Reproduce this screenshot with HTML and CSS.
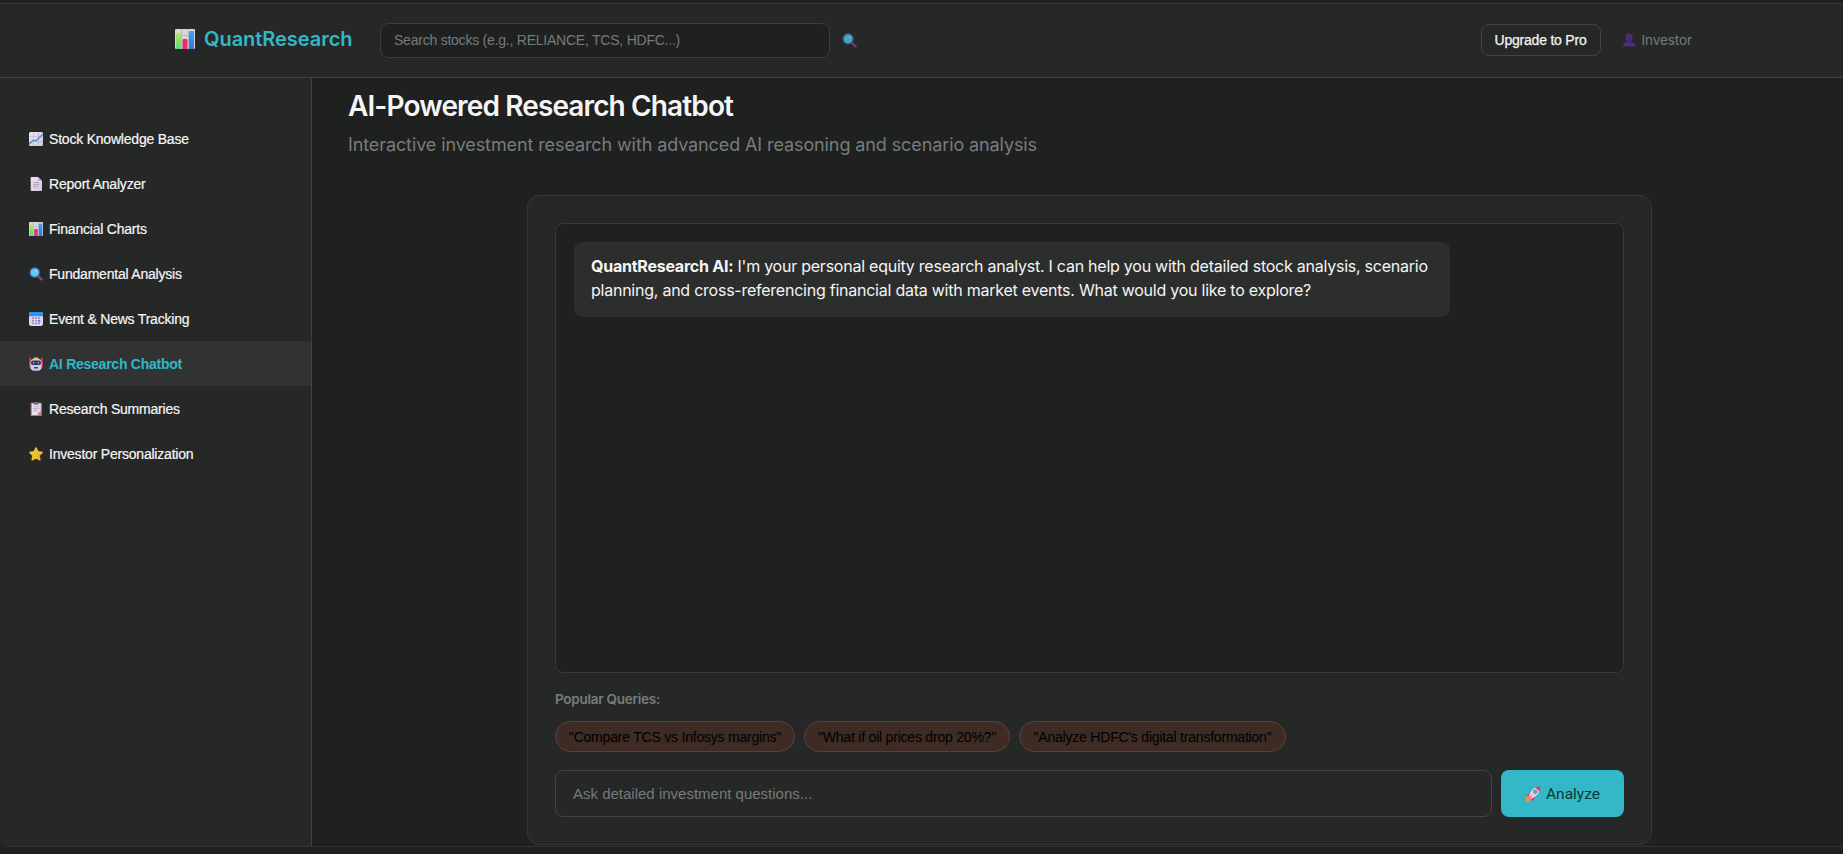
FILE: index.html
```html
<!DOCTYPE html>
<html lang="en">
<head>
<meta charset="utf-8">
<title>QuantResearch</title>
<link rel="stylesheet" href="styles.css">
</head>
<body>
<svg class="defs" width="0" height="0" aria-hidden="true">
  <defs>
    <linearGradient id="gPaper" x1="0" y1="0" x2="1" y2="1"><stop offset="0" stop-color="#eee6f2"/><stop offset="1" stop-color="#d2c5e0"/></linearGradient>
    <linearGradient id="gGreen" x1="0" y1="0" x2="0" y2="1"><stop offset="0" stop-color="#b5ea50"/><stop offset="1" stop-color="#62d08c"/></linearGradient>
    <linearGradient id="gBlue" x1="0" y1="0" x2="0" y2="1"><stop offset="0" stop-color="#30a8f5"/><stop offset="1" stop-color="#3b78d4"/></linearGradient>
    <symbol id="bars" viewBox="0 0 20 20"><rect width="20" height="20" rx="1.2" fill="#dcd3e4"/><path d="M6.5 0v20M13.5 0v20M0 6.5h20M0 13h20" stroke="#b8afc2" stroke-width=".8"/><path d="M1 20V5.3Q1 4 2.3 4h2.4Q6 4 6 5.3V20z" fill="url(#gGreen)"/><path d="M7.5 20v-8.700q0-1.300 1.300-1.300h2.400q1.300 0 1.300 1.300V20z" fill="#e92d70"/><path d="M14 20V3.300Q14 2 15.300 2h2.400Q19 2 19 3.300V20z" fill="url(#gBlue)"/></symbol>
    <symbol id="trend" viewBox="0 0 14 14"><rect width="14" height="14" rx="1.5" fill="url(#gPaper)"/><path d="M4.500 0v14M9.500 0v14M0 4.500h14M0 9.500h14" stroke="#b9afc4" stroke-width=".5"/><path d="M0 12.200L4.500 8l2.300 1L13.800 2.200" fill="none" stroke="#3b91d6" stroke-width="1.300"/></symbol>
    <symbol id="page" viewBox="0 0 14 14"><path d="M2.500 0H9l4 4v9.200q0 .8-.8.800H2.500q-.8 0-.8-.8V.8q0-.8.800-.8z" fill="url(#gPaper)"/><path d="M9 0v3.200q0 .8.800.800H13z" fill="#bcafd0"/><path d="M4 5.700h6M4 7.700h6M4 9.700h4.200" stroke="#a399ab" stroke-width=".9"/></symbol>
    <symbol id="lens" viewBox="0 0 14 14"><path d="M9.200 9.200l3.300 3.100" stroke="#7b4687" stroke-width="2.500" stroke-linecap="round"/><circle cx="5.700" cy="5.500" r="4.700" fill="#58cdee" stroke="#3e63ac" stroke-width="1.200"/><circle cx="7.300" cy="3.800" r=".9" fill="#9be6f8"/></symbol>
    <symbol id="cal" viewBox="0 0 14 14"><rect width="14" height="14" rx="2.200" fill="#dfd5ec"/><path d="M0 4.200V2.200Q0 0 2.200 0h9.600Q14 0 14 2.200v2z" fill="#2c91f4"/><path d="M3 5.200h2v1.700H3zm3 0h2v1.700H6zm3 0h2v1.700H9zM3 7.900h2v1.700H3zm3 0h2v1.700H6zM3 10.600h2v1.600H3zm3 0h2v1.600H6zm3 0h2v1.600H9z" fill="#9c93ab"/><path d="M9 7.900h2.200v1.900H9z" fill="#2c91f4"/></symbol>
    <symbol id="bot" viewBox="0 0 14 14"><path d="M.9.8v9M13.100.8v9" stroke="#ef2f70" stroke-width="1.300" stroke-linecap="round"/><ellipse cx="7" cy="1.600" rx="2.700" ry="1.400" fill="#f6b52d"/><rect x="1.300" y="1.700" width="11.400" height="12" rx="4" fill="#d7c5e5"/><rect x="2" y="3.600" width="10" height="4.400" rx="2" fill="#3b3353"/><circle cx="4.700" cy="5.700" r="1" fill="#39a8ea"/><circle cx="9.300" cy="5.700" r="1" fill="#39a8ea"/><rect x="5" y="10" width="4" height="1.600" rx=".7" fill="#4a355d"/></symbol>
    <symbol id="clip" viewBox="0 0 14 14"><rect x="1.700" y=".7" width="11.200" height="13.300" rx=".8" fill="#bd7d59"/><path d="M2.800 1.500h8.900v8.200l-2.900 3.200h-6z" fill="#e9e0f0"/><path d="M8.800 12.900V9.700h2.900z" fill="#b6a9c5"/><rect x="4.700" y="0" width="5" height="2.800" rx=".8" fill="#75697e"/><path d="M4.300 4.700h6M4.300 6.700h6M4.300 8.700h3.800" stroke="#a499ae" stroke-width=".8"/></symbol>
    <symbol id="star" viewBox="0 0 14 14"><path d="M7 .9l1.900 3.900 4.300.7-3.100 3 .8 4.500L7 11l-3.900 2 .8-4.500-3.100-3 4.300-.7z" fill="#edc133" stroke="#edc133" stroke-width="1.400" stroke-linejoin="round"/><path d="M9 8l3.500-2-2.400 2.500.8 4.500L8 11z" fill="#d9a92e"/></symbol>
    <symbol id="user" viewBox="0 0 14 14"><path d="M.7 13.600Q.7 9.700 4.600 9h4.800q3.900.7 3.900 4.600z" fill="#4b2e7e"/><path d="M3.400 4Q3.400.2 7 .2T10.600 4v1.800Q10.300 8 8.700 9q-1.700 1.500-3.400 0-1.600-1-1.900-3.200z" fill="#472c72"/></symbol>
    <symbol id="rocket" viewBox="0 0 16 16"><path d="M1.200 10.600l3.300-.4 1.800 2.200-2.300 3-3.300.2z" fill="#f79136"/><path d="M5.600 6L1.300 9.800l3.300.9zM10.200 10.500l-2 5-2.200-3.500z" fill="#f3316d"/><path d="M3.800 10.700Q5 4.200 10.800 1.500l3.700 3.600q-2.400 5.800-8.800 7.700z" fill="#ddd2e7"/><path d="M10.500 1.600Q12.700.5 15.500.5q0 2.700-1.200 5z" fill="#ee3161"/><circle cx="10.200" cy="5.700" r="1.700" fill="#5caadf" stroke="#5c6b98" stroke-width=".7"/><path d="M3.500 12.800q1.600-3 3.800-4.200-1 2.700-3.800 4.200z" fill="#f3316d"/></symbol>
  </defs>
</svg>
<div class="app">
  <header class="header">
    <div class="brand"><svg class="brand-icon"><use href="#bars"/></svg><span class="brand-name">QuantResearch</span></div>
    <div class="search"><span>Search stocks (e.g., RELIANCE, TCS, HDFC...)</span></div>
    <svg class="search-icon"><use href="#lens"/></svg>
    <div class="account">
      <button class="upgrade">Upgrade to Pro</button>
      <svg class="user-icon"><use href="#user"/></svg><span class="role">Investor</span>
    </div>
  </header>
  <div class="body">
    <nav class="sidebar">
      <a class="item"><svg><use href="#trend"/></svg><span>Stock Knowledge Base</span></a>
      <a class="item"><svg><use href="#page"/></svg><span>Report Analyzer</span></a>
      <a class="item"><svg><use href="#bars"/></svg><span>Financial Charts</span></a>
      <a class="item"><svg><use href="#lens"/></svg><span>Fundamental Analysis</span></a>
      <a class="item"><svg><use href="#cal"/></svg><span>Event &amp; News Tracking</span></a>
      <a class="item active"><svg><use href="#bot"/></svg><span>AI Research Chatbot</span></a>
      <a class="item"><svg><use href="#clip"/></svg><span>Research Summaries</span></a>
      <a class="item"><svg><use href="#star"/></svg><span>Investor Personalization</span></a>
    </nav>
    <main class="main">
      <h1 class="title">AI-Powered Research Chatbot</h1>
      <p class="subtitle">Interactive investment research with advanced AI reasoning and scenario analysis</p>
      <section class="card">
        <div class="chat">
          <div class="message"><strong>QuantResearch AI:</strong> I'm your personal equity research analyst. I can help you with detailed stock analysis, scenario<br>planning, and cross-referencing financial data with market events. What would you like to explore?</div>
        </div>
        <div class="label">Popular Queries:</div>
        <div class="pills">
          <span class="pill p1">"Compare TCS vs Infosys margins"</span>
          <span class="pill p2">"What if oil prices drop 20%?"</span>
          <span class="pill p3">"Analyze HDFC's digital transformation"</span>
        </div>
        <div class="ask">
          <div class="ask-input">Ask detailed investment questions...</div>
          <button class="analyze"><svg><use href="#rocket"/></svg><span>Analyze</span></button>
        </div>
      </section>
    </main>
  </div>
</div>
</body>
</html>
```
FILE: styles.css
```css
* { box-sizing: border-box; }
body { margin: 0; background: #1f2121; font-family: "Inter", sans-serif; color: #f5f5f5; overflow: hidden; }
.defs { display: block; height: 0; }
svg { flex: none; }
button { margin: 0; padding: 0; background: none; }
.app { height: 854px; padding-top: 3px; display: flex; flex-direction: column; }
.header { height: 75px; flex: none; background: #262828; border-top: 1px solid #353737; border-bottom: 1px solid #414343; display: flex; align-items: center; padding: 0 151px 0 175px; }
.brand { display: flex; align-items: center; gap: 9px; width: 205px; padding-bottom: 3px; }
.brand-icon { width: 20px; height: 20px; }
.brand-name { font-size: 20px; font-weight: 600; letter-spacing: -.04px; color: #32b8c6; }
.search { width: 450px; height: 35px; border: 1px solid #3b3d3d; border-radius: 8px; background: #1f2121; padding: 0 0 1px 13px; display: flex; align-items: center; font: 14px "Liberation Sans", sans-serif; letter-spacing: -.23px; color: #777a7a; }
.search-icon { width: 15px; height: 15px; margin-left: 12px; opacity: .75; }
.account { margin-left: auto; display: flex; align-items: center; padding-bottom: 2px; }
.upgrade { width: 120px; height: 32px; border: 1px solid #444646; border-radius: 8px; color: #f5f5f5; font: 14px "Liberation Sans", sans-serif; letter-spacing: -.21px; -webkit-text-stroke: .25px #f5f5f5; }
.user-icon { width: 14px; height: 14px; margin: 0 6px 0 21px; }
.role { font-size: 13.5px; letter-spacing: -.09px; color: #777c7c; }
.body { height: 769px; display: flex; border-bottom: 1px solid #303232; border-bottom-left-radius: 8px; }
.sidebar { width: 312px; flex: none; background: #262828; border-right: 1px solid #414343; border-bottom-left-radius: 8px; padding-top: 38px; }
.item { height: 45px; padding-left: 29px; display: flex; align-items: center; gap: 6px; font: 14px "Liberation Sans", sans-serif; letter-spacing: -.21px; color: #f5f5f5; -webkit-text-stroke: .2px #f5f5f5; }
.item svg { width: 14px; height: 14px; }
.item.active { background: #313333; color: #32b8c6; font-weight: 700; letter-spacing: -.25px; -webkit-text-stroke: 0; }
.main { flex: 1; padding: 11px 36px 0; }
.title { margin: 0; font-size: 28px; line-height: 34px; font-weight: 600; letter-spacing: -.88px; white-space: nowrap; }
.subtitle { margin: 9px 0 37px; font-size: 18px; line-height: 26px; letter-spacing: -.105px; color: #777c7c; white-space: nowrap; }
.card { width: 1125px; height: 650px; margin-left: 179px; border: 1px solid #353737; border-radius: 12px; background: #262828; padding: 27px; }
.chat { height: 450px; border: 1px solid #393b3b; border-radius: 8px; background: #1f2121; padding: 18px; }
.message { width: 876px; height: 75px; border-radius: 8px; background: #2c2e2e; padding: 12px 17px; font-size: 16px; line-height: 24px; letter-spacing: -.242px; white-space: nowrap; }
.label { margin-top: 16px; height: 20px; line-height: 20px; font-size: 13.5px; font-weight: 600; letter-spacing: -.25px; color: #777c7c; }
.pills { margin-top: 12px; display: flex; gap: 9px; }
.pill { height: 31px; border: 1px solid #55443d; border-radius: 16px; background: #3d2b24; color: #000; font: 14px "Liberation Sans", sans-serif; letter-spacing: -.21px; display: flex; align-items: center; justify-content: center; white-space: nowrap; }
.p1 { width: 240px; }
.p2 { width: 206px; }
.p3 { width: 267px; }
.ask { margin-top: 18px; display: flex; gap: 9px; }
.ask-input { width: 937px; height: 47px; border: 1px solid #414343; border-radius: 8px; padding-left: 17px; display: flex; align-items: center; font: 15px "Liberation Sans", sans-serif; color: #777a7a; }
.analyze { width: 123px; height: 47px; border: 0; border-radius: 8px; background: #32b8c6; color: #13343b; display: flex; align-items: center; justify-content: center; gap: 5px; font: 15.5px Roboto, sans-serif; }
.analyze svg { width: 16px; height: 16px; }
```
